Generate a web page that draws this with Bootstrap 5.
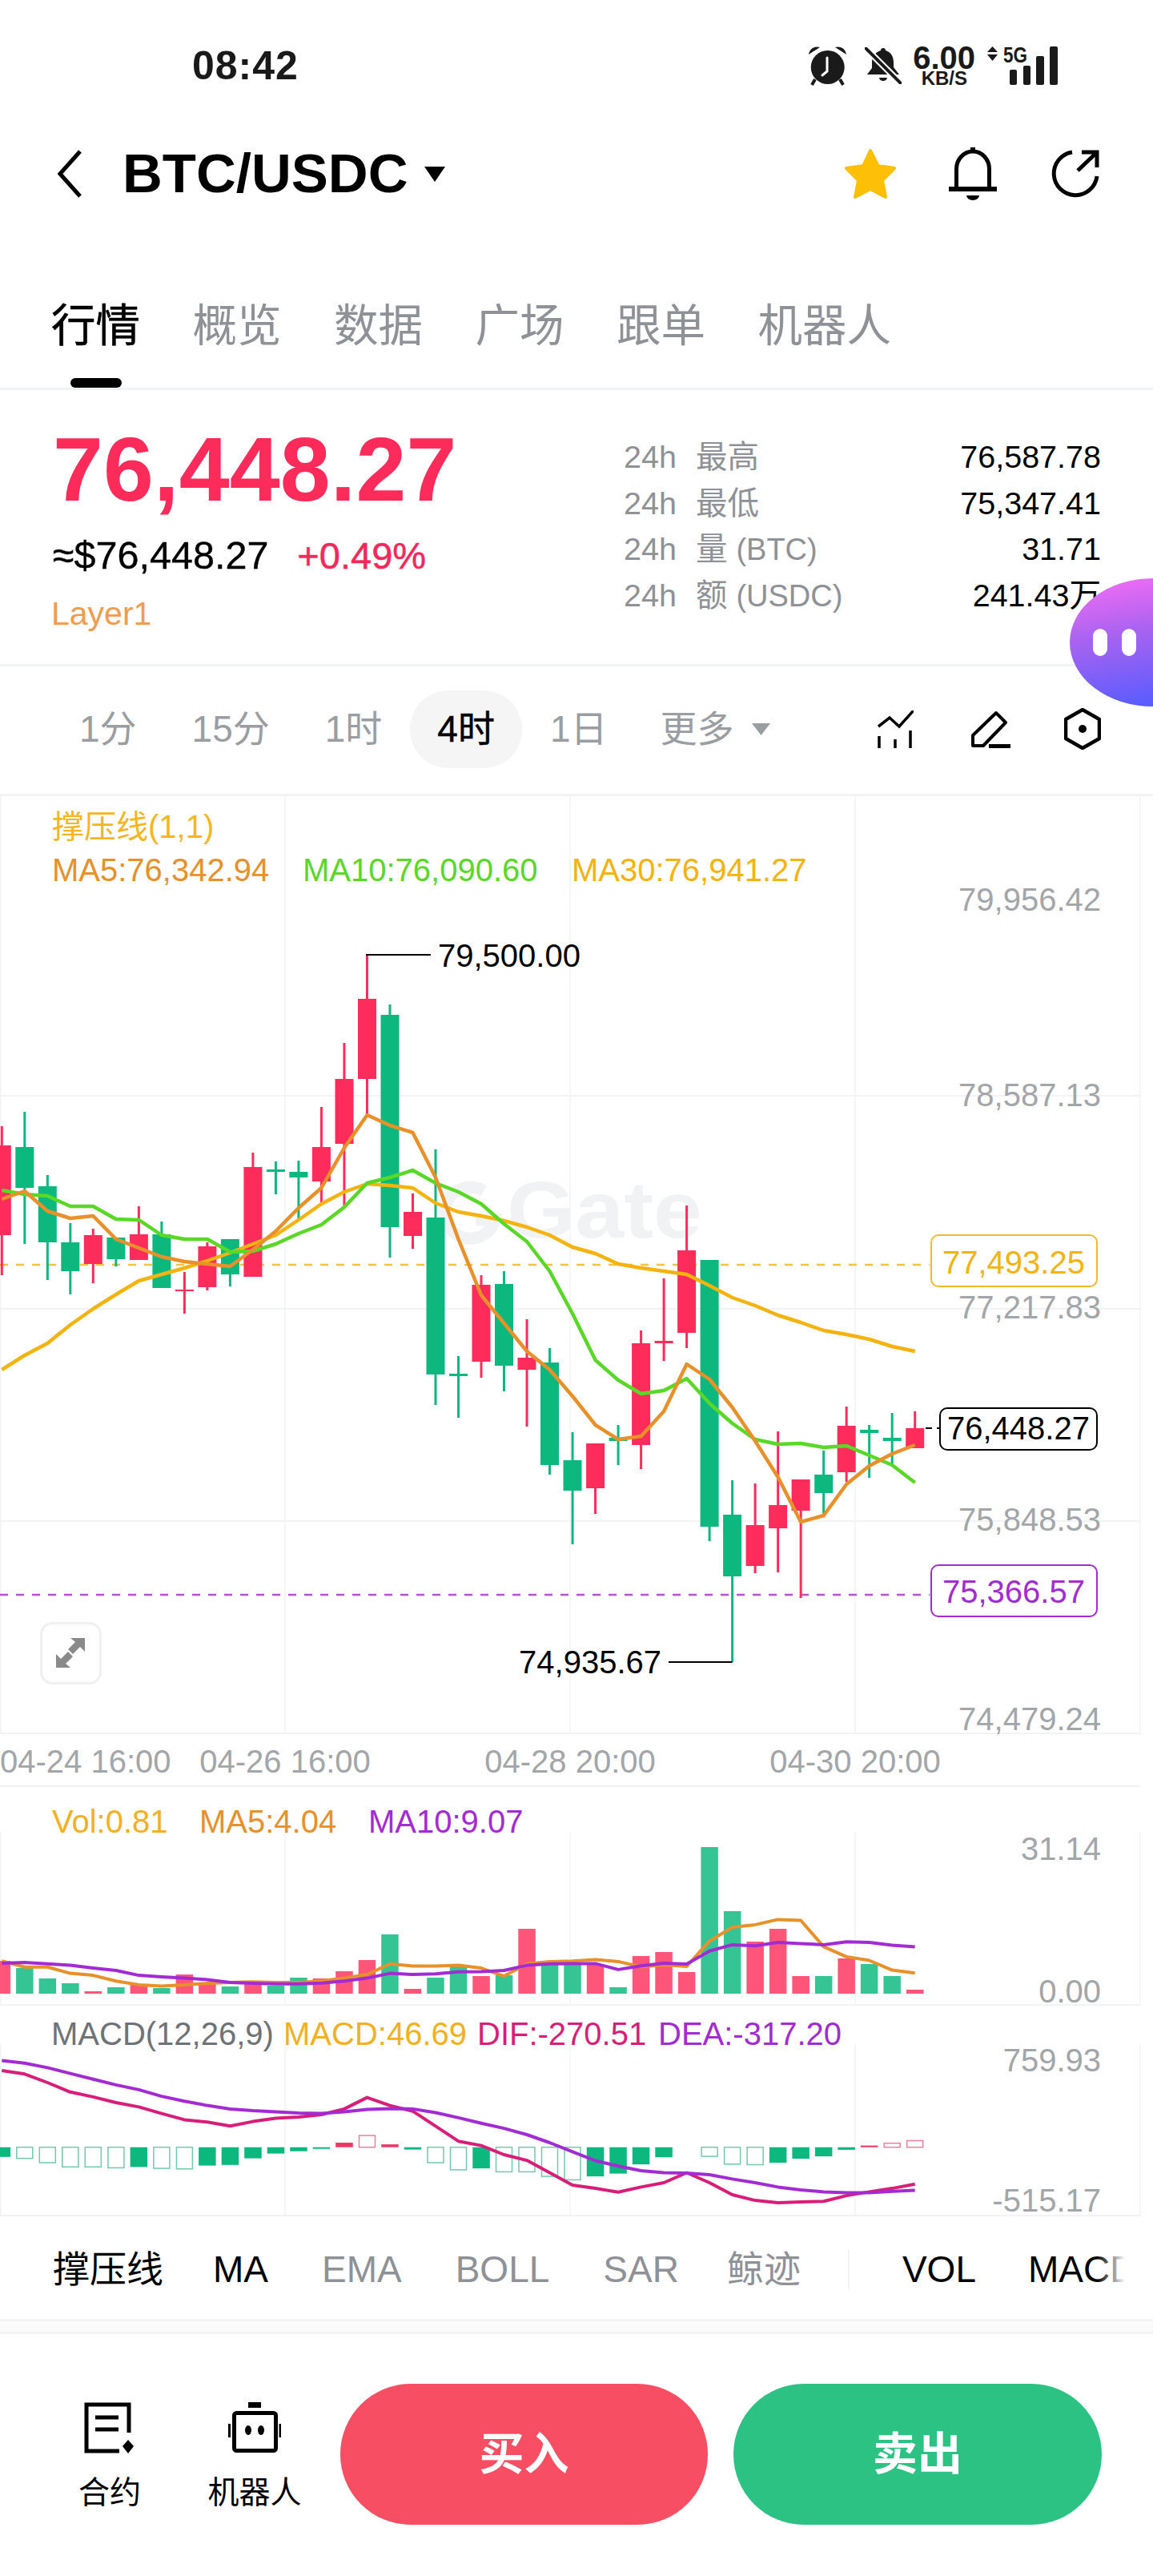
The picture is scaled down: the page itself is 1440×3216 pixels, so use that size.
<!DOCTYPE html>
<html lang="zh">

<head>
    <meta charset="UTF-8">
    <meta name="viewport" content="width=device-width, initial-scale=1.0">
    <title>BTC/USDC</title>
    <link href="https://cdn.jsdelivr.net/npm/bootstrap@5.3.5/dist/css/bootstrap.min.css" rel="stylesheet">
    <style>
        body {
            width: 1440px;
            height: 3216px;
            overflow: hidden;
            position: relative;
            background: #fff;
            color: #000;
            font-family: "Liberation Sans", "Noto Sans CJK SC", sans-serif;
        }

        svg { display: block; flex: none; }
        svg text { font-family: "Liberation Sans", "Noto Sans CJK SC", sans-serif; }

        .status-row { height: 164px; padding: 0 119px 0 240px; color: #1a1a1a; }
        .status-time { font-size: 50px; font-weight: 700; letter-spacing: 1px; }
        .speed-box { width: 78px; margin: 0 15px 0 14px; text-align: right; font-weight: 700; }
        .speed-num { font-size: 40px; line-height: 30px; }
        .speed-unit { font-size: 24px; line-height: 20px; padding-right: 10px; margin-top: 1px; }

        .head-row { height: 106px; padding: 0 67px 0 72px; }
        .pair-name { font-size: 69px; font-weight: 700; line-height: 80px; margin: 0 20px 0 50px; }

        .tab-row { height: 217px; padding: 105px 0 0 64px; gap: 65.5px; border-bottom: 3px solid #f2f3f4; }
        .tab-item { font-size: 55.5px; line-height: 64px; color: #8e9196; position: relative; height: 109px; }
        .tab-item.on { color: #000; -webkit-text-stroke: 0.6px #000; }
        .tab-item.on::after {
            content: "";
            position: absolute;
            left: 24px;
            bottom: 0;
            width: 64px;
            height: 12px;
            border-radius: 6px;
            background: #000;
        }

        .price-block { height: 345px; padding: 43px 65px 0 66px; border-bottom: 3px solid #f2f3f4; }
        .price-big { font-size: 113px; font-weight: 700; line-height: 112px; letter-spacing: 0.2px; color: #fc2b5a; }
        .price-sub { font-size: 48.5px; line-height: 50px; margin-top: 26px; -webkit-text-stroke: 0.4px #000; }
        .price-chg { color: #f5285b; margin-left: 36px; font-size: 47px; -webkit-text-stroke: 0.5px #f5285b; }
        .price-tag { font-size: 41px; line-height: 44px; margin: 25px 0 0 -2px; color: #f49b4e; }
        .stat-col { width: 596px; padding-top: 12px; }
        .stat-line { height: 57.5px; font-size: 39.5px; line-height: 57.5px; }
        .stat-name { color: #8e9196; }
        .stat-unit { font-size: 38px; }

        .bubble-ai {
            position: absolute;
            left: 1336px;
            top: 722px;
            width: 104px;
            height: 160px;
            border-radius: 104px 0 0 104px / 80px 0 0 80px;
            background: linear-gradient(170deg, #f96df6 0%, #a863f0 45%, #575cff 100%);
            gap: 18px;
            padding-left: 29px;
        }
        .bubble-eye { width: 18px; height: 34px; border-radius: 9px; background: #fff; }

        .period-row { height: 162px; padding: 0 65px 3px 65px; gap: 1px; border-bottom: 3px solid #f2f3f4; font-size: 46px; color: #9a9da1; }
        .period-item { padding: 0 34px; height: 97px; line-height: 97px; border-radius: 48px; }
        .period-item.on { background: #f5f5f5; color: #000; -webkit-text-stroke: 0.5px #000; }
        .period-more { margin-left: -3px; }
        .more-caret { margin-left: 22px; }

        .axis-text { font-size: 40px; fill: #a3a6a9; }
        .legend-text { font-size: 40px; }
        .mark-text { font-size: 40px; fill: #000; }

        .indicator-row { height: 130px; padding: 3px 0 0 66px; border-bottom: 3px solid #f2f3f4; font-size: 46px; color: #8e9196; position: relative; overflow: hidden; white-space: nowrap; }
        .indicator-row::after {
            content: "";
            position: absolute;
            right: 0;
            top: 0;
            bottom: 0;
            width: 70px;
            background: linear-gradient(90deg, rgba(255, 255, 255, 0), #fff 50%);
        }
        .ind-on { color: #000; }
        .ind-item { margin-right: 67px; flex: none; }
        .ind-line { width: 2px; height: 50px; background: #f2f3f4; margin-right: 66px; margin-left: -8px; flex: none; }

        .gap-band { height: 16px; background: #fbfbfb; border-bottom: 3px solid #f2f3f4; }

        .foot-row { height: 302px; padding: 62px 0 0 77px; }
        .foot-tool { width: 120px; padding-top: 23px; font-size: 39px; line-height: 46px; text-align: center; }
        .foot-tool svg { margin: 0 auto 26px; }
        .foot-btn { height: 176px; border-radius: 88px; border: 0; color: #fff; font-size: 56px; font-weight: 700; }
        .btn-buy { width: 459px; background: #f84e63; margin-left: 47px; }
        .btn-sell { width: 460px; background: #2cc284; margin-left: 32px; }
    </style>
</head>

<body>
    <div class="status-row d-flex align-items-center">
        <span class="status-time">08:42</span>
        <div class="d-flex align-items-center ms-auto">
            <svg width="50" height="50" viewBox="0 0 50 50">
                <circle cx="24.7" cy="27" r="21" fill="#1a1a1a" />
                <path d="M1 11C2 4 8 0 15 2z M48 11C47 4 41 0 34 2z" fill="#1a1a1a" />
                <path d="M9 42l-4 7 M40 42l4 7" stroke="#1a1a1a" stroke-width="4" />
                <path d="M24 15v17l-6 5" stroke="#fff" stroke-width="3" fill="none" stroke-linecap="round" />
            </svg>
            <svg width="46" height="46" viewBox="0 0 46 46" style="margin-left:21px">
                <path d="M23 1a3 3 0 0 1 3 3c7 2 10 8 10 15v6l7 9H3l6-8v-8c0-6 4-12 11-14a3 3 0 0 1 3-3z" fill="#1a1a1a" />
                <path d="M18 38h10a5 4 0 0 1-10 0z" fill="#1a1a1a" />
                <path d="M1 1l44 44" stroke="#fff" stroke-width="8" />
                <path d="M1 1l44 44" stroke="#1a1a1a" stroke-width="4" stroke-linecap="round" />
            </svg>
            <div class="speed-box">
                <div class="speed-num">6.00</div>
                <div class="speed-unit">KB/S</div>
            </div>
            <svg width="88" height="62" viewBox="0 -6 88 62">
                <path d="M6.500 1L13 8H0z M0 11h13L6.500 19z" fill="#1a1a1a" />
                <text x="20" y="21" font-size="28" font-weight="700" fill="#1a1a1a" textLength="30" lengthAdjust="spacingAndGlyphs">5G</text>
                <rect x="28" y="30" width="9" height="19" rx="2" fill="#1a1a1a" />
                <rect x="45" y="25" width="9" height="24" rx="2" fill="#1a1a1a" />
                <rect x="61" y="13" width="10" height="36" rx="2" fill="#1a1a1a" />
                <rect x="78" y="1" width="10" height="48" rx="2" fill="#1a1a1a" />
            </svg>
        </div>
    </div>

    <div class="head-row d-flex align-items-center">
        <svg width="31" height="60" viewBox="0 0 31 60">
            <path d="M28 2L3 30l25 28" fill="none" stroke="#000" stroke-width="5" />
        </svg>
        <span class="pair-name">BTC/USDC</span>
        <svg width="26" height="19" viewBox="0 0 26 19">
            <path d="M0 0h26L13 19z" fill="#000" />
        </svg>
        <svg width="66" height="64" viewBox="0 0 66 64" class="ms-auto">
            <path d="M33 3l9.500 19L63 25 48 40l4 21-19-10-19 10 4-21L3 25l21-3z" fill="#fdc007" stroke="#fdc007" stroke-width="4" stroke-linejoin="round" />
        </svg>
        <svg width="60" height="66" viewBox="0 0 60 66" style="margin-left:65px">
            <path d="M9.500 50V27a20.500 22 0 0 1 41 0v23" fill="none" stroke="#000" stroke-width="5" />
            <path d="M0 49h60v6H0z M27 0h6v7h-6z" fill="#000" />
            <path d="M22 60h16a8 6 0 0 1-16 0z" fill="#000" />
        </svg>
        <svg width="60" height="60" viewBox="0 0 60 60" style="margin-left:68px">
            <path d="M26 3A27 27 0 1 0 57 33" fill="none" stroke="#000" stroke-width="5" />
            <path d="M33 26L56 4 M38 3h19v19" fill="none" stroke="#000" stroke-width="5" />
        </svg>
    </div>

    <div class="tab-row d-flex">
        <div class="tab-item on">行情</div>
        <div class="tab-item">概览</div>
        <div class="tab-item">数据</div>
        <div class="tab-item">广场</div>
        <div class="tab-item">跟单</div>
        <div class="tab-item">机器人</div>
    </div>

    <div class="price-block d-flex justify-content-between">
        <div>
            <div class="price-big">76,448.27</div>
            <div class="price-sub">≈$76,448.27<span class="price-chg">+0.49%</span></div>
            <div class="price-tag">Layer1</div>
        </div>
        <div class="stat-col">
            <div class="stat-line d-flex justify-content-between"><span class="stat-name">24h<span class="ms-4">最高</span></span><span>76,587.78</span></div>
            <div class="stat-line d-flex justify-content-between"><span class="stat-name">24h<span class="ms-4">最低</span></span><span>75,347.41</span></div>
            <div class="stat-line d-flex justify-content-between"><span class="stat-name">24h<span class="ms-4">量 <span class="stat-unit">(BTC)</span></span></span><span>31.71</span></div>
            <div class="stat-line d-flex justify-content-between"><span class="stat-name">24h<span class="ms-4">额 <span class="stat-unit">(USDC)</span></span></span><span>241.43万</span></div>
        </div>
    </div>

    <div class="period-row d-flex align-items-center">
        <div class="period-item">1分</div>
        <div class="period-item">15分</div>
        <div class="period-item">1时</div>
        <div class="period-item on">4时</div>
        <div class="period-item">1日</div>
        <div class="period-item period-more d-flex align-items-center">更多
            <svg width="23" height="15" viewBox="0 0 23 15" class="more-caret">
                <path d="M0 0h23L11.500 15z" fill="#9a9da1" />
            </svg>
        </div>
        <svg width="46" height="47" viewBox="0 0 46 47" class="ms-auto" style="margin-right:69px">
            <path d="M2 20L16 9l12 11L46 0" fill="none" stroke="#000" stroke-width="3.500" />
            <path d="M3 32v15 M23 36v11 M42 25v22" stroke="#000" stroke-width="3.500" />
        </svg>
        <svg width="51" height="47" viewBox="0 0 51 47" style="margin-right:66px">
            <path d="M33 3l12 12-28 29H4V31z" fill="none" stroke="#000" stroke-width="4" stroke-linejoin="round" />
            <path d="M24 44.500h27" stroke="#000" stroke-width="5" />
        </svg>
        <svg width="46" height="52" viewBox="0 0 46 52">
            <path d="M23 2l21 12v24L23 50 2 38V14z" fill="none" stroke="#000" stroke-width="4.500" stroke-linejoin="round" />
            <circle cx="23" cy="26" r="5" fill="#000" />
        </svg>
    </div>

    <svg id="paneChart" width="1440" height="1774" viewBox="0 994 1440 1774"></svg>

    <div class="indicator-row d-flex align-items-center">
        <span class="ind-item ind-on" style="margin-right:62px">撑压线</span>
        <span class="ind-item ind-on">MA</span>
        <span class="ind-item">EMA</span>
        <span class="ind-item">BOLL</span>
        <span class="ind-item" style="margin-right:60px">SAR</span>
        <span class="ind-item">鲸迹</span>
        <span class="ind-line"></span>
        <span class="ind-item ind-on" style="margin-right:65px">VOL</span>
        <span class="ind-item ind-on">MACD</span>
    </div>
    <div class="gap-band"></div>

    <div class="foot-row d-flex align-items-start">
        <div class="foot-tool">
            <svg width="64" height="64" viewBox="0 0 64 64">
                <path d="M56 38V3H3v58h41" fill="none" stroke="#000" stroke-width="5" />
                <path d="M14 19h29 M14 34h29" stroke="#000" stroke-width="5" />
                <path d="M55 47l7 8-7 9-7-9z" fill="#000" />
            </svg>
            合约
        </div>
        <div class="foot-tool" style="margin-left:61px">
            <svg width="66" height="64" viewBox="0 0 66 64">
                <rect x="25" y="0" width="16" height="7" fill="#000" />
                <rect x="7.500" y="13.500" width="52" height="47" rx="3" fill="none" stroke="#000" stroke-width="5" />
                <path d="M1.500 27v17 M65 27v17" stroke="#000" stroke-width="3" />
                <ellipse cx="25" cy="35" rx="4" ry="6" fill="#000" />
                <ellipse cx="41" cy="35" rx="4" ry="6" fill="#000" />
            </svg>
            机器人
        </div>
        <button type="button" class="foot-btn btn-buy">买入</button>
        <button type="button" class="foot-btn btn-sell">卖出</button>
    </div>

    <div class="bubble-ai d-flex align-items-center">
        <span class="bubble-eye"></span>
        <span class="bubble-eye"></span>
    </div>

    <script src="https://cdn.jsdelivr.net/npm/bootstrap@5.3.5/dist/js/bootstrap.bundle.min.js"></script>
    <script>
        const RED = '#fe2c5a';
        const GREEN = '#0cb87e';
        const ORANGE = '#e8902a';
        const LIME = '#5ad827';
        const YELLOW = '#f5b30f';
        const PURPLE = '#a32bd4';
        const MAGENTA = '#d81e78';
        const GRID = '#f2f3f5';

        function xOf(i) {
            return 2.3 + 28.51 * i;
        }

        // [color, wick top, body top, body bottom, wick bottom]
        const velas = [
            ['r', 1406, 1430, 1542, 1592], ['g', 1388, 1432, 1483, 1553], ['g', 1467, 1481, 1551, 1598],
            ['g', 1527, 1551, 1587, 1616], ['r', 1534, 1542, 1578, 1602], ['g', 1545, 1545, 1572, 1581],
            ['r', 1506, 1541, 1573, 1573], ['g', 1525, 1541, 1608, 1608], ['r', 1588, 1610, 1612, 1640],
            ['r', 1551, 1556, 1607, 1611], ['g', 1547, 1547, 1591, 1606], ['r', 1439, 1457, 1594, 1594],
            ['g', 1450, 1460, 1463, 1491], ['g', 1449, 1463, 1470, 1522], ['r', 1382, 1432, 1475, 1502],
            ['r', 1302, 1347, 1428, 1505], ['r', 1192, 1247, 1347, 1392], ['g', 1254, 1267, 1532, 1570],
            ['r', 1490, 1513, 1543, 1559], ['g', 1435, 1520, 1716, 1754], ['g', 1693, 1715, 1718, 1770],
            ['r', 1592, 1604, 1700, 1720], ['g', 1587, 1603, 1705, 1737], ['r', 1647, 1695, 1710, 1781],
            ['g', 1683, 1701, 1829, 1841], ['g', 1788, 1823, 1861, 1928], ['r', 1802, 1802, 1858, 1890],
            ['g', 1779, 1795, 1799, 1829], ['r', 1661, 1677, 1804, 1834], ['r', 1596, 1674, 1677, 1699],
            ['r', 1505, 1561, 1664, 1683], ['g', 1573, 1573, 1906, 1924], ['g', 1848, 1891, 1968, 2075],
            ['r', 1852, 1904, 1955, 1964], ['r', 1787, 1879, 1908, 1963], ['r', 1847, 1847, 1886, 1995],
            ['g', 1811, 1841, 1864, 1893], ['r', 1756, 1780, 1838, 1850], ['g', 1779, 1785, 1789, 1845],
            ['g', 1764, 1795, 1799, 1828], ['r', 1762, 1783, 1808, 1808]
        ];

        const ma5 = [1497, 1487, 1512, 1521, 1518, 1547, 1558, 1569, 1575, 1578, 1581, 1560, 1537, 1508, 1483, 1433, 1392, 1405, 1414, 1470, 1547, 1617, 1652, 1687, 1710, 1743, 1779, 1797, 1793, 1762, 1703, 1722, 1757, 1799, 1844, 1900, 1892, 1853, 1830, 1815, 1804];
        const ma10 = [1486, 1491, 1493, 1506, 1506, 1522, 1523, 1542, 1547, 1547, 1563, 1562, 1553, 1540, 1529, 1507, 1477, 1470, 1461, 1477, 1488, 1503, 1528, 1550, 1587, 1640, 1698, 1723, 1740, 1736, 1721, 1752, 1777, 1797, 1803, 1802, 1807, 1805, 1817, 1829, 1851];
        const ma30 = [1710, 1692, 1677, 1654, 1634, 1616, 1599, 1591, 1583, 1574, 1564, 1553, 1542, 1523, 1503, 1488, 1478, 1480, 1483, 1502, 1513, 1518, 1524, 1532, 1542, 1557, 1565, 1578, 1583, 1587, 1591, 1605, 1620, 1630, 1642, 1651, 1661, 1666, 1672, 1681, 1687];

        const volTop = [2448, 2457, 2470, 2476, 2486, 2481, 2478, 2482, 2465, 2477, 2480, 2473, 2479, 2469, 2470, 2461, 2447, 2415, 2483, 2469, 2455, 2467, 2466, 2408, 2452, 2452, 2452, 2481, 2442, 2437, 2462, 2306, 2386, 2424, 2408, 2467, 2467, 2445, 2452, 2467, 2484];
        const volMa5 = [695, 716, 716, 738, 745, 765, 778, 783, 778, 773, 770, 768, 770, 770, 765, 755, 742, 705, 713, 713, 710, 720, 748, 705, 697, 695, 690, 697, 715, 708, 714, 625, 577, 568, 550, 553, 645, 680, 693, 727, 737];
        const volMa10 = [703, 700, 705, 710, 720, 728, 745, 750, 755, 760, 770, 773, 775, 775, 772, 765, 755, 738, 742, 740, 733, 732, 728, 710, 705, 704, 704, 725, 712, 703, 706, 660, 638, 642, 630, 634, 638, 628, 630, 640, 645];

        // valores leidos a escala de captura, zona MACD: [tipo, borde]
        const hist = [
            ['f', 1380], ['h', 1385], ['h', 1400], ['h', 1415], ['h', 1415], ['h', 1418], ['f', 1415], ['h', 1420], ['h', 1422], ['f', 1410], ['f', 1408],
            ['f', 1385], ['f', 1368], ['f', 1360], ['f', 1349], ['rf', 1330], ['rh', 1305], ['rf', 1336], ['f', 1354], ['h', 1400], ['h', 1425], ['f', 1420],
            ['h', 1432], ['h', 1432], ['h', 1448], ['h', 1460], ['f', 1448], ['f', 1438], ['f', 1406], ['f', 1381], ['n', 1345], ['h', 1378], ['h', 1405],
            ['h', 1407], ['f', 1400], ['f', 1386], ['f', 1378], ['f', 1355], ['rf', 1340], ['rh', 1332], ['rh', 1323]
        ];
        const dif = [1078, 1090, 1120, 1153, 1170, 1190, 1205, 1228, 1250, 1258, 1272, 1256, 1245, 1240, 1232, 1212, 1172, 1200, 1220, 1272, 1325, 1340, 1372, 1392, 1435, 1478, 1490, 1503, 1485, 1470, 1435, 1470, 1512, 1532, 1540, 1537, 1535, 1515, 1502, 1490, 1475];
        const dea = [1043, 1052, 1068, 1088, 1108, 1128, 1145, 1168, 1185, 1200, 1212, 1218, 1222, 1226, 1228, 1222, 1214, 1211, 1212, 1225, 1243, 1262, 1280, 1302, 1330, 1362, 1393, 1412, 1428, 1435, 1436, 1442, 1457, 1470, 1485, 1495, 1502, 1505, 1505, 1500, 1497];

        function zonaY(v) {
            return 2200 + v / 2.8;
        }

        function linea(x1, y1, x2, y2, color, ancho, extra) {
            return `<line x1="${x1}" y1="${y1}" x2="${x2}" y2="${y2}" stroke="${color}" stroke-width="${ancho}" ${extra || ''} />`;
        }

        function curva(datos, color, ancho) {
            const puntos = datos.map((y, i) => `${xOf(i).toFixed(1)},${y.toFixed(1)}`).join(' ');
            return `<polyline points="${puntos}" fill="none" stroke="${color}" stroke-width="${ancho}" stroke-linejoin="round" />`;
        }

        function texto(x, cy, txt, clase, color, ancla) {
            const fill = color ? `fill="${color}"` : '';
            return `<text x="${x}" y="${cy + 14}" class="${clase}" ${fill} text-anchor="${ancla || 'start'}">${txt}</text>`;
        }

        function rejilla(top, bottom, filas) {
            let s = '';
            [0.8, 356, 712, 1068, 1424].forEach(x => { s += linea(x, top, x, bottom, GRID, 1.5); });
            filas.forEach(y => { s += linea(0, y, 1424, y, GRID, 2); });
            return s;
        }

        function dibujarKline() {
            let s = rejilla(994, 2164, [1368, 1634, 1899, 2164]);
            s += linea(0, 2230, 1424, 2230, GRID, 2);

            // marca de agua
            s += '<path d="M604 1487a32 32 0 1 0 14 36h-24" fill="none" stroke="#f1f2f3" stroke-width="15" />';
            s += '<text x="633" y="1545" font-size="100" font-weight="700" fill="#f1f2f3" textLength="244" lengthAdjust="spacingAndGlyphs">Gate</text>';

            s += linea(0, 1579, 1161, 1579, '#f5c33d', 2.5, 'stroke-dasharray="10 10"');
            s += linea(0, 1991, 1161, 1991, '#b84fd6', 2.5, 'stroke-dasharray="10 10"');

            velas.forEach((v, i) => {
                const x = xOf(i);
                const c = v[0] === 'r' ? RED : GREEN;
                s += linea(x, v[1], x, v[4], c, 3);
                s += `<rect x="${(x - 11.500).toFixed(1)}" y="${v[2]}" width="23" height="${v[3] - v[2]}" fill="${c}" />`;
            });

            s += curva(ma30, YELLOW, 4.5);
            s += curva(ma10, LIME, 4.5);
            s += curva(ma5, ORANGE, 4.5);

            // maximo y minimo
            s += linea(457, 1192, 538, 1192, '#000', 2);
            s += texto(547, 1193, '79,500.00', 'mark-text');
            s += linea(914.500, 2075, 835, 2075, '#000', 2);
            s += texto(826, 2075, '74,935.67', 'mark-text', null, 'end');

            // eje de precios
            [[1123, '79,956.42'], [1367, '78,587.13'], [1632, '77,217.83'], [1897, '75,848.53'], [2146, '74,479.24']].forEach(p => {
                s += texto(1375, p[0], p[1], 'axis-text', null, 'end');
            });

            s += `<rect x="1163" y="1542" width="207" height="64" rx="9" fill="#fff" stroke="#f5b82e" stroke-width="2" />`;
            s += texto(1266, 1576, '77,493.25', 'legend-text', YELLOW, 'middle');
            s += `<rect x="1163" y="1954" width="207" height="64" rx="9" fill="#fff" stroke="${PURPLE}" stroke-width="2" />`;
            s += texto(1266, 1987, '75,366.57', 'legend-text', PURPLE, 'middle');
            s += linea(1156, 1783, 1173, 1783, '#000', 2, 'stroke-dasharray="8 6"');
            s += `<rect x="1174" y="1758" width="196" height="52" rx="9" fill="#fff" stroke="#000" stroke-width="2" />`;
            s += texto(1272, 1783, '76,448.27', 'legend-text', '#000', 'middle');

            // leyendas
            s += texto(65, 1032, '撑压线(1,1)', 'legend-text', '#f5b624');
            s += texto(65, 1086, 'MA5:76,342.94', 'legend-text', ORANGE);
            s += texto(378, 1086, 'MA10:76,090.60', 'legend-text', LIME);
            s += texto(714, 1086, 'MA30:76,941.27', 'legend-text', YELLOW);

            // eje de tiempo
            [[0, '04-24 16:00', 'start'], [356, '04-26 16:00', 'middle'], [712, '04-28 20:00', 'middle'], [1068, '04-30 20:00', 'middle']].forEach(p => {
                s += texto(p[0], 2199, p[1], 'axis-text', null, p[2]);
            });

            // boton expandir
            s += '<rect x="51.500" y="2026.500" width="74" height="75" rx="14" fill="#fff" stroke="#f0f0f0" stroke-width="3" />';
            s += '<path d="M106 2045v17l-6-6-9 9-6-6 9-9-6-5z M70 2082v-17l6 6 9-9 6 6-9 9 6 5z" fill="#8a8a8a" />';

            return s;
        }

        function dibujarVol() {
            let s = rejilla(2287, 2503, [2503]);
            volTop.forEach((y, i) => {
                const c = velas[i][0] === 'r' ? '#ff5578' : '#35c494';
                s += `<rect x="${(xOf(i) - 10.750).toFixed(1)}" y="${y}" width="21.500" height="${2489 - y}" fill="${c}" />`;
            });
            s += curva(volMa5.map(zonaY), ORANGE, 4);
            s += curva(volMa10.map(zonaY), PURPLE, 4);
            s += texto(65, 2274, 'Vol:0.81', 'legend-text', '#f5b01d');
            s += texto(249, 2274, 'MA5:4.04', 'legend-text', ORANGE);
            s += texto(460, 2274, 'MA10:9.07', 'legend-text', PURPLE);
            s += texto(1375, 2308, '31.14', 'axis-text', null, 'end');
            s += texto(1375, 2486, '0.00', 'axis-text', null, 'end');
            return s;
        }

        function dibujarMacd() {
            let s = rejilla(2552, 2766, [2766]);
            const cero = zonaY(1346);
            hist.forEach((h, i) => {
                if (h[0] === 'n') return;
                const x = xOf(i) - 10.750;
                const y = zonaY(h[1]);
                const arriba = y < cero;
                const alto = Math.max(Math.abs(y - cero), 2);
                const top = arriba ? y : cero;
                if (h[0] === 'f') {
                    s += `<rect x="${x.toFixed(1)}" y="${top.toFixed(1)}" width="21.500" height="${alto.toFixed(1)}" fill="${GREEN}" />`;
                } else if (h[0] === 'rf') {
                    s += `<rect x="${x.toFixed(1)}" y="${top.toFixed(1)}" width="21.500" height="${alto.toFixed(1)}" fill="#ec3a66" />`;
                } else {
                    const borde = h[0] === 'h' ? '#72c9ac' : '#ee7f9b';
                    s += `<rect x="${(x + 0.750).toFixed(1)}" y="${top.toFixed(1)}" width="20" height="${alto.toFixed(1)}" fill="#fff" stroke="${borde}" stroke-width="1.500" />`;
                }
            });
            s += curva(dif.map(zonaY), MAGENTA, 4);
            s += curva(dea.map(zonaY), PURPLE, 4);
            s += texto(64, 2539, 'MACD(12,26,9)', 'legend-text', '#6f7276');
            s += texto(354, 2539, 'MACD:46.69', 'legend-text', '#f5b01d');
            s += texto(596, 2539, 'DIF:-270.51', 'legend-text', MAGENTA);
            s += texto(822, 2539, 'DEA:-317.20', 'legend-text', PURPLE);
            s += texto(1375, 2572, '759.93', 'axis-text', null, 'end');
            s += texto(1375, 2747, '-515.17', 'axis-text', null, 'end');
            return s;
        }

        document.getElementById('paneChart').innerHTML = dibujarKline() + dibujarVol() + dibujarMacd();
    </script>
</body>

</html>
